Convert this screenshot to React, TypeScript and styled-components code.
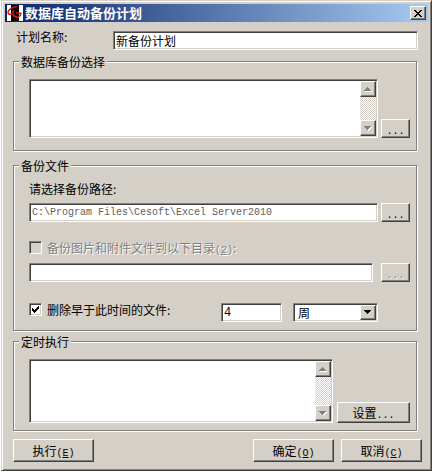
import React, { useState } from "react";
import styled, { createGlobalStyle, css } from "styled-components";

const face = "#d4d0c8";
const shadow = "#808080";
const dark = "#404040";
const light = "#ffffff";

const GlobalStyle = createGlobalStyle`
  * { box-sizing: border-box; }
  body {
    margin: 0;
    background: #fff;
    color: #000;
    font: 12px/15px "Noto Sans CJK SC", "Liberation Sans", sans-serif;
  }
  button, input, select { font: inherit; color: inherit; margin: 0; }
`;

const raised = css`
  background: ${face};
  border: 1px solid;
  border-color: ${light} ${dark} ${dark} ${light};
  box-shadow: inset -1px -1px 0 ${shadow};
`;

const sunken = css`
  background: ${light};
  border: 1px solid;
  border-color: ${shadow} ${light} ${light} ${shadow};
  box-shadow: inset 1px 1px 0 ${dark}, inset -1px -1px 0 ${face};
`;

const Dialog = styled.main`
  margin: 0 2px 1px 1px;
  padding: 3px;
  background: ${face};
  border: 1px solid;
  border-color: ${face} ${dark} ${dark} ${face};
  box-shadow: inset 1px 1px 0 ${light}, inset -1px -1px 0 ${shadow};
`;

const TitleBar = styled.header`
  display: flex;
  align-items: center;
  height: 18px;
  padding: 0 2px;
  background: linear-gradient(to right, #0a246a, #a6caf0);
`;

const Title = styled.h1`
  flex: 1;
  margin: 0 0 0 2px;
  color: #fff;
  font-size: 13px;
  line-height: 18px;
  font-weight: 700;
`;

const CloseButton = styled.button`
  ${raised}
  display: grid;
  place-items: center;
  width: 16px;
  height: 14px;
  padding: 0;
`;

const Body = styled.form`
  display: flex;
  flex-direction: column;
  padding: 9px 11px 5px 8px;
`;

const NameRow = styled.div`
  display: flex;
  margin: 0 -1px 4px 3px;
`;

const NameLabel = styled.label`
  width: 97px;
  line-height: 12px;
`;

const Group = styled.fieldset<{ $pad: string; $gap: number }>`
  min-width: 0;
  margin: 0 0 ${(p) => p.$gap}px;
  padding: ${(p) => p.$pad};
  border: 1px solid ${shadow};
  box-shadow: 1px 1px 0 ${light}, inset 1px 1px 0 ${light};
`;

const Legend = styled.legend`
  margin-left: -10px;
  padding: 0 2px;
  background: ${face};
`;

const Row = styled.div<{ $gap?: number; $top?: number; $align?: string }>`
  display: flex;
  align-items: ${(p) => p.$align ?? "flex-end"};
  gap: ${(p) => p.$gap ?? 3}px;
  margin-top: ${(p) => p.$top ?? 0}px;
`;

const TextBox = styled.input<{ $mono?: boolean }>`
  ${sunken}
  flex: 1;
  min-width: 0;
  height: 19px;
  padding: 0 2px;
  border-radius: 0;
  outline: none;
  ${(p) => p.$mono && css`font: 10px/15px "Liberation Mono", monospace;`}
  &:read-only { color: #606060; }
`;

const NumberBox = styled(TextBox)`
  flex: 0 0 61px;
  font: 12px/15px "Liberation Mono", monospace;
`;

const PushButton = styled.button<{ $w: number; $h: number }>`
  ${raised}
  flex: none;
  width: ${(p) => p.$w}px;
  height: ${(p) => p.$h}px;
  padding: 0;
  white-space: nowrap;
  &:disabled { color: ${shadow}; text-shadow: 1px 1px 0 ${light}; }
`;

const Latin = styled.span`
  font: 10px/1 "Liberation Mono", monospace;
  line-height: 0;
`;

const ListFrame = styled.div<{ $h: number }>`
  ${sunken}
  display: flex;
  flex: 1;
  height: ${(p) => p.$h}px;
  padding: 1px;
`;

const ListItems = styled.div`
  flex: 1;
`;

const ScrollTrack = styled.div`
  display: flex;
  flex-direction: column;
  justify-content: space-between;
  width: 16px;
  background: repeating-conic-gradient(${face} 0 25%, ${light} 0 50%) 0 0 / 2px 2px;
`;

const ScrollButton = styled.button`
  ${raised}
  display: grid;
  place-items: center;
  width: 16px;
  height: 16px;
  padding: 0;
`;

const CheckLabel = styled.label<{ $disabled?: boolean }>`
  display: flex;
  align-items: center;
  gap: 5px;
  line-height: 12px;
  ${(p) => p.$disabled && css`color: ${shadow}; text-shadow: 1px 1px 0 ${light};`}
`;

const CheckFrame = styled.span`
  display: grid;
  place-items: center;
  & > * { grid-area: 1 / 1; }
  svg { pointer-events: none; }
`;

const CheckInput = styled.input`
  ${sunken}
  appearance: none;
  width: 13px;
  height: 13px;
  &:disabled { background: ${face}; }
`;

const SelectFrame = styled.div`
  display: grid;
  width: 85px;
  margin-right: 32px;
  & > * { grid-area: 1 / 1; }
`;

const Select = styled.select`
  ${sunken}
  appearance: none;
  height: 19px;
  padding: 0 20px 0 4px;
  border-radius: 0;
  line-height: 15px;
`;

const SelectArrow = styled.span`
  ${raised}
  display: grid;
  place-items: center;
  justify-self: end;
  width: 16px;
  margin: 2px;
  pointer-events: none;
`;

const Spacer = styled.span`
  flex: 1;
`;

const Footer = styled.footer`
  display: flex;
  gap: 7px;
  margin-right: -5px;
`;

const Logo = () => (
  <svg width="16" height="16" viewBox="0 0 16 16" aria-hidden="true">
    <rect width="16" height="16" fill="#fff" />
    <rect x="4" width="8" height="16" fill="#000" />
    <path
      d="M10 1.5C6 1.5 1 4.500 1 7.500c0 2 3 2.500 6 1.500M7 5.500c-2 2-1 5 1 6s5 .5 6-2.500M9 7.500l5.500 1"
      fill="none"
      stroke="#d8141c"
      strokeWidth="1.600"
    />
  </svg>
);

const Triangle = ({ up, active }: { up?: boolean; active?: boolean }) => {
  const d = up ? "M3 0h1v1h1v1h1v1h1v1H0V3h1V2h1V1h1z" : "M0 0h7v1H6v1H5v1H4v1H3V3H2V2H1V1H0z";
  return (
    <svg width="8" height="5" viewBox="0 0 8 5" shapeRendering="crispEdges" aria-hidden="true">
      {!active && <path d={d} fill="#fff" transform="translate(1 1)" />}
      <path d={d} fill={active ? "#000" : shadow} />
    </svg>
  );
};

const ListBox = ({ label, height }: { label: string; height: number }) => (
  <ListFrame $h={height}>
    <ListItems role="listbox" aria-label={label} tabIndex={0} />
    <ScrollTrack>
      <ScrollButton type="button" aria-label="向上滚动"><Triangle up /></ScrollButton>
      <ScrollButton type="button" aria-label="向下滚动"><Triangle /></ScrollButton>
    </ScrollTrack>
  </ListFrame>
);

const Key = ({ letter }: { letter: string }) => (
  <Latin>(<u>{letter}</u>)</Latin>
);

const Browse = ({ label, disabled }: { label: string; disabled?: boolean }) => (
  <PushButton type="button" $w={29} $h={19} aria-label={label} disabled={disabled}>
    <Latin>...</Latin>
  </PushButton>
);

export default function App() {
  const [name, setName] = useState("新备份计划");
  const [attachDir, setAttachDir] = useState("");
  const [purge, setPurge] = useState(true);
  const [count, setCount] = useState("4");
  const [unit, setUnit] = useState("周");

  return (
    <>
      <GlobalStyle />
      <Dialog>
        <TitleBar>
          <Logo />
          <Title>数据库自动备份计划</Title>
          <CloseButton type="button" aria-label="关闭">
            <svg width="8" height="7" viewBox="0 0 8 7" shapeRendering="crispEdges" aria-hidden="true">
              <path d="M0 0h2v1h1v1h2V1h1V0h2v1H7v1H6v1H5v1h1v1h1v1h1v1H6V6H5V5H3v1H2v1H0V6h1V5h1V4h1V3H2V2H1V1H0z" />
            </svg>
          </CloseButton>
        </TitleBar>
        <Body onSubmit={(e) => e.preventDefault()}>
          <NameRow>
            <NameLabel htmlFor="plan">计划名称:</NameLabel>
            <TextBox id="plan" value={name} onChange={(e) => setName(e.target.value)} />
          </NameRow>

          <Group $pad="10px 6px 12px 15px" $gap={7}>
            <Legend>数据库备份选择</Legend>
            <Row>
              <ListBox label="数据库备份选择" height={59} />
              <Browse label="选择数据库" />
            </Row>
          </Group>

          <Group $pad="8px 6px 8px 15px" $gap={3}>
            <Legend>备份文件</Legend>
            <label htmlFor="path">请选择备份路径:</label>
            <Row $top={7}>
              <TextBox id="path" $mono readOnly value="C:\Program Files\Cesoft\Excel Server2010" />
              <Browse label="浏览备份路径" />
            </Row>
            <Row $top={19}>
              <CheckLabel $disabled>
                <CheckFrame><CheckInput type="checkbox" disabled /></CheckFrame>
                <span>备份图片和附件文件到以下目录<Key letter="2" />:</span>
              </CheckLabel>
            </Row>
            <Row $top={9} $gap={8}>
              <TextBox aria-label="图片和附件目录" value={attachDir} onChange={(e) => setAttachDir(e.target.value)} />
              <Browse label="浏览图片和附件目录" disabled />
            </Row>
            <Row $top={21} $gap={11} $align="flex-start">
              <CheckLabel>
                <CheckFrame>
                  <CheckInput type="checkbox" checked={purge} onChange={(e) => setPurge(e.target.checked)} />
                  {purge && (
                    <svg width="7" height="7" viewBox="0 0 7 7" shapeRendering="crispEdges" aria-hidden="true">
                      <path d="M0 2h1v1h1v1h1V3h1V2h1V1h1V0h1v3H6v1H5v1H4v1H3v1H2V6H1V5H0z" />
                    </svg>
                  )}
                </CheckFrame>
                <span>删除早于此时间的文件:</span>
              </CheckLabel>
              <Spacer />
              <NumberBox aria-label="数量" value={count} onChange={(e) => setCount(e.target.value)} />
              <SelectFrame>
                <Select aria-label="时间单位" value={unit} onChange={(e) => setUnit(e.target.value)}>
                  <option>周</option>
                </Select>
                <SelectArrow><Triangle active /></SelectArrow>
              </SelectFrame>
            </Row>
          </Group>

          <Group $pad="10px 6px 7px 15px" $gap={8}>
            <Legend>定时执行</Legend>
            <Row $gap={4}>
              <ListBox label="定时执行" height={64} />
              <PushButton type="button" $w={73} $h={21}>设置<Latin>...</Latin></PushButton>
            </Row>
          </Group>

          <Footer>
            <PushButton type="button" $w={81} $h={23}>执行<Key letter="E" /></PushButton>
            <Spacer />
            <PushButton type="submit" $w={81} $h={23}>确定<Key letter="O" /></PushButton>
            <PushButton type="button" $w={81} $h={23}>取消<Key letter="C" /></PushButton>
          </Footer>
        </Body>
      </Dialog>
    </>
  );
}
